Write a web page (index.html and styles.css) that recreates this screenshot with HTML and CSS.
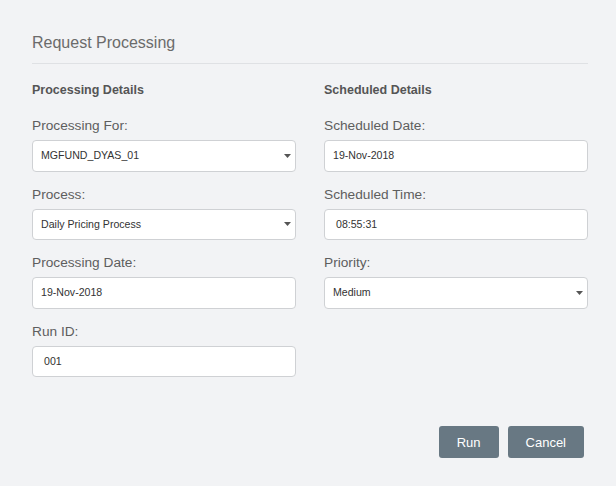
FILE: index.html
```html
<!DOCTYPE html>
<html>
<head>
<meta charset="utf-8">
<link rel="stylesheet" href="styles.css">
</head>
<body>
<div class="dialog">
  <h1 class="title">Request Processing</h1>
  <div class="columns">
    <div class="col">
      <h2 class="section">Processing Details</h2>
      <div class="group">
        <div class="label">Processing For:</div>
        <div class="field select">MGFUND_DYAS_01<svg class="caret" width="7" height="4" viewBox="0 0 7 4"><path d="M0 0H7L3.5 4Z"/></svg></div>
      </div>
      <div class="group">
        <div class="label">Process:</div>
        <div class="field select">Daily Pricing Process<svg class="caret" width="7" height="4" viewBox="0 0 7 4"><path d="M0 0H7L3.5 4Z"/></svg></div>
      </div>
      <div class="group">
        <div class="label">Processing Date:</div>
        <div class="field">19-Nov-2018</div>
      </div>
      <div class="group">
        <div class="label">Run ID:</div>
        <div class="field wide-pad">001</div>
      </div>
    </div>
    <div class="col">
      <h2 class="section">Scheduled Details</h2>
      <div class="group">
        <div class="label">Scheduled Date:</div>
        <div class="field">19-Nov-2018</div>
      </div>
      <div class="group">
        <div class="label">Scheduled Time:</div>
        <div class="field wide-pad">08:55:31</div>
      </div>
      <div class="group">
        <div class="label">Priority:</div>
        <div class="field select">Medium<svg class="caret" width="7" height="4" viewBox="0 0 7 4"><path d="M0 0H7L3.5 4Z"/></svg></div>
      </div>
    </div>
  </div>
  <div class="actions">
    <button class="btn">Run</button>
    <button class="btn">Cancel</button>
  </div>
</div>
</body>
</html>
```
FILE: styles.css
```css
html, body {
  margin: 0;
  background: #f2f3f5;
}
body {
  font-family: "Liberation Sans", Arial, sans-serif;
  padding: 32px 28px 0 32px;
}
.dialog {
  width: 556px;
}
.title {
  margin: 0;
  font-size: 16px;
  line-height: 22px;
  font-weight: normal;
  color: #6b6b6b;
  padding-bottom: 9px;
  border-bottom: 1px solid #dfe1e4;
}
.columns {
  display: grid;
  grid-template-columns: 264px 264px;
  column-gap: 28px;
  margin-top: 16px;
}
.section {
  margin: 0 0 16px 0;
  font-size: 12.5px;
  line-height: 20px;
  font-weight: bold;
  color: #555;
}
.group {
  margin-bottom: 13px;
}
.label {
  font-size: 13.7px;
  line-height: 20px;
  color: #5e5e5e;
  margin-bottom: 4px;
}
.field {
  box-sizing: border-box;
  height: 31.5px;
  background: #fff;
  border: 1px solid #cfd1d4;
  border-radius: 4px;
  padding: 0 5px 0 8px;
  font-size: 10.6px;
  line-height: 29px;
  color: #333;
  display: flex;
  align-items: center;
}
.wide-pad {
  padding-left: 11px;
}
.select {
  justify-content: space-between;
}
.caret {
  fill: #555;
  margin-right: -1px;
}
.actions {
  display: flex;
  justify-content: flex-end;
  gap: 9px;
  padding-right: 4px;
  margin-top: 36px;
}
.btn {
  font-family: "Liberation Sans", Arial, sans-serif;
  font-size: 13px;
  height: 32px;
  padding: 0 18px;
  border: none;
  border-radius: 3px;
  background: #687883;
  color: #fff;
}
```
